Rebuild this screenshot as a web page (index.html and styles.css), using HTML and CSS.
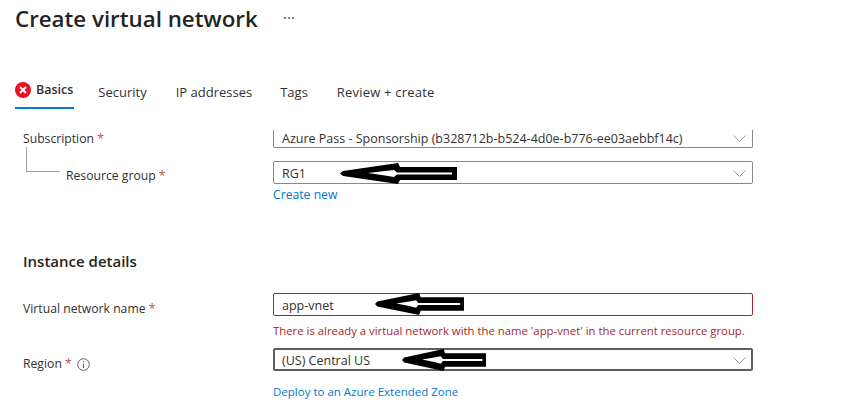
FILE: index.html
```html
<!DOCTYPE html>
<html lang="en">
<head>
    <meta charset="UTF-8">
    <meta name="viewport" content="width=device-width, initial-scale=1.0">
    <title>Create virtual network</title>
    <link rel="stylesheet" href="styles.css">
</head>
<body>
    <svg class="defs" width="0" height="0" aria-hidden="true">
        <symbol id="arrow" viewBox="0 0 117 21" preserveAspectRatio="none">
            <path d="M0 10.5 L3 8 L58 0 L60 4 H117 V17 H60 L58 21 L3 13 Z" fill="#000"/>
            <path d="M28 10 L45 8 L54 7 L57 9.5 H112 V11.5 H57 L54 14 L45 12.5 Z" fill="#fff"/>
        </symbol>
    </svg>

    <header class="page-head">
        <h1>Create virtual network</h1>
        <span class="more">&middot;&middot;&middot;</span>
    </header>

    <nav class="tabs">
        <a class="tab tab-active">
            <svg class="err-icon" width="16" height="16" viewBox="0 0 16 16">
                <circle cx="8" cy="8" r="8" fill="#e81123"/>
                <path d="M5 5 L11 11 M11 5 L5 11" stroke="#fff" stroke-width="2"/>
            </svg>
            Basics
        </a>
        <a class="tab">Security</a>
        <a class="tab tab-ip">IP addresses</a>
        <a class="tab">Tags</a>
        <a class="tab tab-last">Review + create</a>
    </nav>

    <main class="form">
        <div class="row row-sub">
            <label>Subscription <span class="req">*</span></label>
            <div class="field select clipped">
                <span>Azure Pass - Sponsorship (b328712b-b524-4d0e-b776-ee03aebbf14c)</span>
                <svg class="chev" width="13" height="7" viewBox="0 0 13 7"><path d="M0.5 0.5 L6.5 6.5 L12.5 0.5" fill="none" stroke="#a19f9d"/></svg>
            </div>
        </div>

        <div class="row row-rg">
            <label class="indented">Resource group <span class="req">*</span></label>
            <div class="control">
                <div class="field select">
                    <span>RG1</span>
                    <svg class="chev" width="13" height="7" viewBox="0 0 13 7"><path d="M0.5 0.5 L6.5 6.5 L12.5 0.5" fill="none" stroke="#a19f9d"/></svg>
                    <svg class="mark mark-rg"><use href="#arrow"/></svg>
                </div>
                <a class="link link-new">Create new</a>
            </div>
        </div>

        <h2>Instance details</h2>

        <div class="row row-name">
            <label>Virtual network name <span class="req">*</span></label>
            <div class="control">
                <div class="field invalid">
                    <span>app-vnet</span>
                    <svg class="mark mark-name"><use href="#arrow"/></svg>
                </div>
                <div class="error-text">There is already a virtual network with the name 'app-vnet' in the current resource group.</div>
            </div>
        </div>

        <div class="row row-region">
            <label>Region <span class="req">*</span>
                <svg class="info" width="13" height="13" viewBox="0 0 13 13">
                    <circle cx="6.5" cy="6.5" r="5.8" fill="none" stroke="#605e5c"/>
                    <path d="M6.5 5.5 V10 M6.5 3 V4.3" stroke="#605e5c"/>
                </svg>
            </label>
            <div class="control">
                <div class="field select focused">
                    <span>(US) Central US</span>
                    <svg class="chev" width="13" height="7" viewBox="0 0 13 7"><path d="M0.5 0.5 L6.5 6.5 L12.5 0.5" fill="none" stroke="#a19f9d"/></svg>
                    <svg class="mark mark-region"><use href="#arrow"/></svg>
                </div>
                <a class="link link-zone">Deploy to an Azure Extended Zone</a>
            </div>
        </div>
    </main>
</body>
</html>
```

FILE: styles.css
```css
* {
    box-sizing: border-box;
}
html, body {
    height: 100%;
}
body {
    margin: 0;
    background: #fff;
    color: #323130;
    font-family: "Open Sans", "Noto Sans", Arial, sans-serif;
    font-size: 12.2px;
    overflow: hidden;
}
.defs {
    position: absolute;
}
.page-head {
    display: flex;
    align-items: center;
    height: 36px;
    padding-left: 15px;
}
h1 {
    margin: 0;
    font-size: 22.3px;
    font-weight: 600;
    color: #252423;
    white-space: nowrap;
}
.more {
    margin-left: 25px;
    font-size: 16px;
    color: #605e5c;
}
.tabs {
    display: flex;
    margin-top: 40px;
    margin-left: 15px;
    height: 33px;
}
.tab {
    display: flex;
    align-items: center;
    gap: 5px;
    margin-right: 29px;
    height: 33px;
    padding-bottom: 2px;
    font-size: 13px;
    white-space: nowrap;
}
.tab-active {
    margin-right: 24px;
    border-bottom: 2px solid #0078d4;
    padding-bottom: 4px;
    padding-right: 1px;
    font-size: 12.5px;
    font-weight: 600;
}
.tab-ip {
    margin-right: 28px;
}
.tab-last {
    letter-spacing: 0.2px;
}
.form {
    padding: 21px 0 0 23px;
}
.row {
    display: flex;
    align-items: flex-start;
}
.row label {
    width: 250px;
    flex: none;
    position: relative;
    line-height: 18px;
    white-space: nowrap;
}
.req {
    color: #a4262c;
    opacity: 0.8;
}
.control {
    width: 480px;
}
.field {
    position: relative;
    display: flex;
    align-items: center;
    justify-content: space-between;
    width: 480px;
    height: 23px;
    padding: 1px 6px 0 8px;
    border: 1px solid #8a8886;
    border-radius: 2px;
    background: #fff;
    font-size: 12.5px;
    white-space: nowrap;
}
.clipped {
    height: 18px;
    padding: 0 6px 1px 8px;
    border-top: none;
    border-radius: 0 0 2px 2px;
}
.invalid {
    border-color: #a4262c;
}
.focused {
    border: 2px solid #605e5c;
    padding-left: 7px;
    padding-right: 5px;
}
.chev {
    flex: none;
}
.mark {
    position: absolute;
}
.mark-rg {
    left: 66px;
    top: 1px;
    width: 117px;
    height: 21px;
}
.mark-name {
    left: 101px;
    top: -1px;
    width: 89px;
    height: 22px;
}
.mark-region {
    left: 127px;
    top: -1px;
    width: 84px;
    height: 22px;
}
.link {
    display: block;
    color: #0078d4;
}
.row-rg {
    margin-top: 13px;
}
.row-rg label {
    padding-left: 43px;
    padding-top: 6px;
}
/* tree line from Subscription down to Resource group */
.row-rg label::before {
    content: "";
    position: absolute;
    left: 3px;
    top: -14px;
    width: 33px;
    height: 24px;
    border-left: 1px solid #a19f9d;
    border-bottom: 1px solid #a19f9d;
}
.link-new {
    margin-top: 2px;
    line-height: 18px;
}
h2 {
    margin: 46px 0 0;
    font-size: 15px;
    font-weight: 600;
    line-height: 22px;
    color: #252423;
}
.row-name {
    margin-top: 21px;
}
.row-name label,
.row-region label {
    padding-top: 7px;
}
.error-text {
    margin-top: 7px;
    font-size: 11.35px;
    line-height: 16px;
    color: #a4262c;
    white-space: nowrap;
}
.row-region {
    margin-top: 9px;
}
.info {
    vertical-align: -3px;
    margin-left: 2px;
}
.link-zone {
    margin-top: 12px;
    font-size: 11.5px;
    line-height: 18px;
}
```
